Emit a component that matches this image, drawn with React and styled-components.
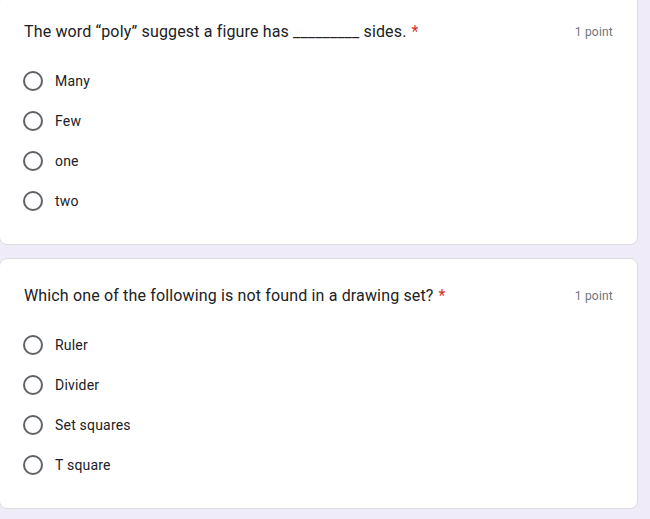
import React from "react"
import styled, { createGlobalStyle } from "styled-components"

const GlobalStyle = createGlobalStyle`
  html, body {
    margin: 0;
    padding: 0;
    background: #f0ebf8;
    overflow: hidden;
  }
  body {
    font-family: Roboto, "Liberation Sans", Arial, sans-serif;
  }
`

const Page = styled.div`
  display: flex;
  flex-direction: column;
  gap: 13px;
  margin-top: -6px;
  margin-left: -1px;
  width: 639px;
`

const Card = styled.div`
  background: #fff;
  border: 1px solid #dadce0;
  border-radius: 8px;
  padding: 24px 24px 0 24px;
  height: 251px;
  box-sizing: border-box;
`

const Header = styled.div`
  display: flex;
  justify-content: space-between;
  align-items: center;
`

const Title = styled.div`
  font-size: 16px;
  letter-spacing: 0.15px;
  color: #202124;
  line-height: 24px;
`

const Required = styled.span`
  color: #d93025;
  margin-left: 5px;
`

const Points = styled.div`
  font-size: 12px;
  color: #70757a;
  letter-spacing: 0.2px;
  line-height: 24px;
  margin-top: 1px;
`

const Options = styled.div`
  display: flex;
  flex-direction: column;
  margin-top: 17px;
`

const Option = styled.label`
  display: flex;
  align-items: center;
  height: 40px;
  gap: 12px;
  font-size: 14px;
  letter-spacing: 0.2px;
  color: #202124;
`

const Radio = styled.span`
  width: 20px;
  height: 20px;
  border: 2px solid #5f6368;
  border-radius: 50%;
  box-sizing: border-box;
  margin-left: -1px;
  flex-shrink: 0;
`

const questions = [
  {
    title: "The word \u201cpoly\u201d suggest a figure has _________ sides.",
    options: ["Many", "Few", "one", "two"],
  },
  {
    title: "Which one of the following is not found in a drawing set?",
    options: ["Ruler", "Divider", "Set squares", "T square"],
  },
]

export default function App() {
  return (
    <>
      <GlobalStyle />
      <Page>
        {questions.map(q => (
          <Card key={q.title}>
            <Header>
              <Title>
                {q.title}
                <Required>*</Required>
              </Title>
              <Points>1 point</Points>
            </Header>
            <Options>
              {q.options.map(o => (
                <Option key={o}>
                  <Radio />
                  {o}
                </Option>
              ))}
            </Options>
          </Card>
        ))}
      </Page>
    </>
  )
}
